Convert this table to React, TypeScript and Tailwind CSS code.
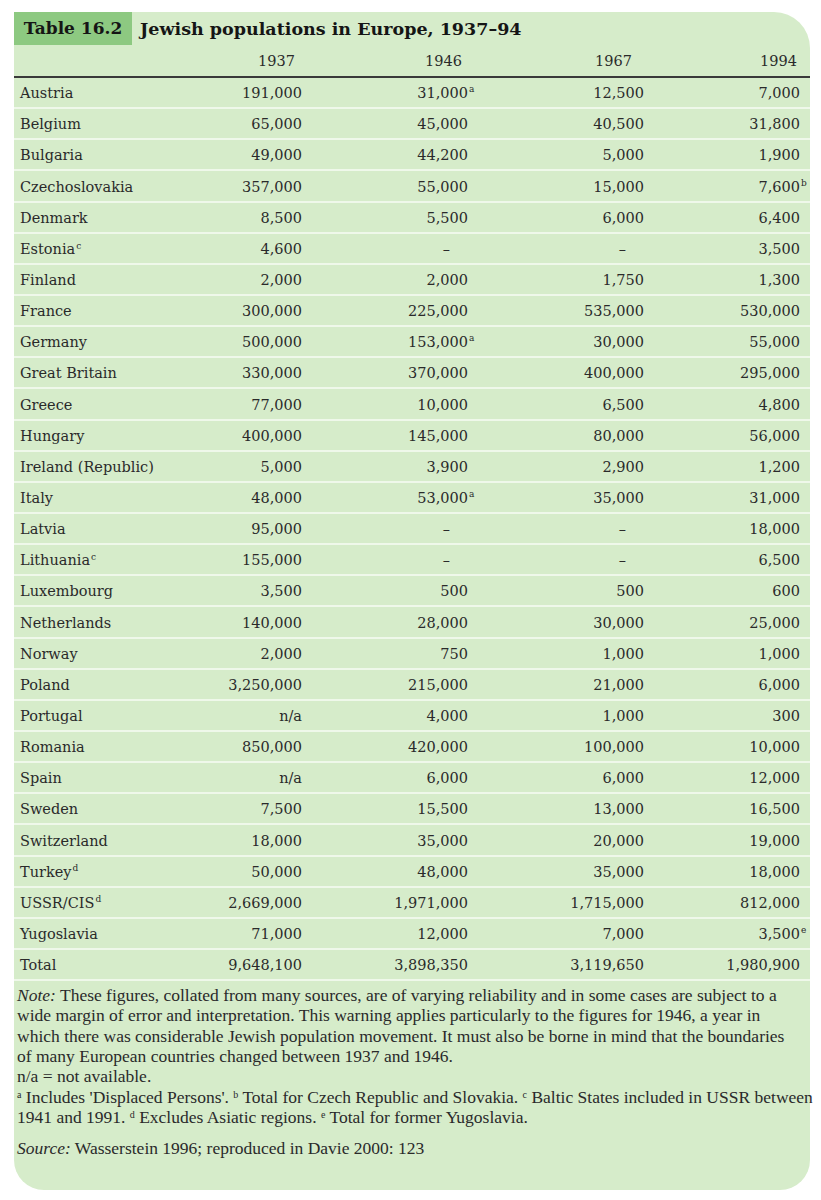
import React from 'react';

type Cell = string | [string, string];

const rows: { name: string; sup?: string; vals: Cell[] }[] = [
  { name: 'Austria', vals: ['191,000', ['31,000', 'a'], '12,500', '7,000'] },
  { name: 'Belgium', vals: ['65,000', '45,000', '40,500', '31,800'] },
  { name: 'Bulgaria', vals: ['49,000', '44,200', '5,000', '1,900'] },
  { name: 'Czechoslovakia', vals: ['357,000', '55,000', '15,000', ['7,600', 'b']] },
  { name: 'Denmark', vals: ['8,500', '5,500', '6,000', '6,400'] },
  { name: 'Estonia', sup: 'c', vals: ['4,600', '–', '–', '3,500'] },
  { name: 'Finland', vals: ['2,000', '2,000', '1,750', '1,300'] },
  { name: 'France', vals: ['300,000', '225,000', '535,000', '530,000'] },
  { name: 'Germany', vals: ['500,000', ['153,000', 'a'], '30,000', '55,000'] },
  { name: 'Great Britain', vals: ['330,000', '370,000', '400,000', '295,000'] },
  { name: 'Greece', vals: ['77,000', '10,000', '6,500', '4,800'] },
  { name: 'Hungary', vals: ['400,000', '145,000', '80,000', '56,000'] },
  { name: 'Ireland (Republic)', vals: ['5,000', '3,900', '2,900', '1,200'] },
  { name: 'Italy', vals: ['48,000', ['53,000', 'a'], '35,000', '31,000'] },
  { name: 'Latvia', vals: ['95,000', '–', '–', '18,000'] },
  { name: 'Lithuania', sup: 'c', vals: ['155,000', '–', '–', '6,500'] },
  { name: 'Luxembourg', vals: ['3,500', '500', '500', '600'] },
  { name: 'Netherlands', vals: ['140,000', '28,000', '30,000', '25,000'] },
  { name: 'Norway', vals: ['2,000', '750', '1,000', '1,000'] },
  { name: 'Poland', vals: ['3,250,000', '215,000', '21,000', '6,000'] },
  { name: 'Portugal', vals: ['n/a', '4,000', '1,000', '300'] },
  { name: 'Romania', vals: ['850,000', '420,000', '100,000', '10,000'] },
  { name: 'Spain', vals: ['n/a', '6,000', '6,000', '12,000'] },
  { name: 'Sweden', vals: ['7,500', '15,500', '13,000', '16,500'] },
  { name: 'Switzerland', vals: ['18,000', '35,000', '20,000', '19,000'] },
  { name: 'Turkey', sup: 'd', vals: ['50,000', '48,000', '35,000', '18,000'] },
  { name: 'USSR/CIS', sup: 'd', vals: ['2,669,000', '1,971,000', '1,715,000', '812,000'] },
  { name: 'Yugoslavia', vals: ['71,000', '12,000', '7,000', ['3,500', 'e']] },
  { name: 'Total', vals: ['9,648,100', '3,898,350', '3,119,650', '1,980,900'] },
];

const grid = 'grid grid-cols-[190px_92px_166px_176px_156px] pl-[6px] pr-[10px]';

function NumCell({ v }: { v: Cell }) {
  if (Array.isArray(v)) {
    return (
      <div className="text-right">
        <span className="relative">
          {v[0]}
          <span className="absolute left-full top-[-2px] pl-[1px] text-[9px]">{v[1]}</span>
        </span>
      </div>
    );
  }
  if (v === '–') return <div className="text-right pr-[18px]">–</div>;
  return <div className="text-right">{v}</div>;
}

function Fn({ c }: { c: string }) {
  return <sup className="text-[10px] leading-none">{c}</sup>;
}

export default function App() {
  return (
    <div className="w-[821px] h-[1200px] bg-white pl-[14px] pt-[12px]">
      <div className="w-[796px] h-[1178px] bg-[#d6ecca] rounded-tr-[36px] rounded-b-[30px] text-[#2a2a2a]">
        {/* title strip */}
        <div className="flex items-center h-[33px] font-['DejaVu_Serif',serif] font-bold text-[#151515]">
          <div className="h-full w-[118px] bg-[#8dc981] flex items-center justify-center text-[17px] pt-[1px]">
            Table 16.2
          </div>
          <div className="ml-[8px] text-[17.5px] pt-[1px]">Jewish populations in Europe, 1937–94</div>
        </div>

        <div className="font-['DejaVu_Serif',serif] text-[14.5px]">
          {/* header */}
          <div className={`${grid} h-[33px] items-center border-b-2 border-[#3a3a3a] pt-[2px]`}>
            <div />
            <div className="text-right pr-[7px]">1937</div>
            <div className="text-right pr-[6px]">1946</div>
            <div className="text-right pr-[12px]">1967</div>
            <div className="text-right pr-[3px]">1994</div>
          </div>

          {rows.map((r) => (
            <div key={r.name} className={`${grid} h-[31.15px] items-center border-b-2 border-[#eff8ea] pt-[3px]`}>
              <div>
                {r.name}
                {r.sup && <sup className="text-[9px] top-[-0.6em] ml-[1px]">{r.sup}</sup>}
              </div>
              {r.vals.map((v, i) => (
                <NumCell key={i} v={v} />
              ))}
            </div>
          ))}
        </div>

        {/* notes */}
        <div className="px-[3px] pt-[4px] font-['Liberation_Serif',serif] text-[17.5px] leading-[20.3px] text-[#2a2a2a] whitespace-nowrap">
          <p>
            <i>Note:</i> These figures, collated from many sources, are of varying reliability and in some cases are subject to a
            <br />
            wide margin of error and interpretation. This warning applies particularly to the figures for 1946, a year in
            <br />
            which there was considerable Jewish population movement. It must also be borne in mind that the boundaries
            <br />
            of many European countries changed between 1937 and 1946.
          </p>
          <p>n/a = not available.</p>
          <p>
            <Fn c="a" /> Includes 'Displaced Persons'. <Fn c="b" /> Total for Czech Republic and Slovakia. <Fn c="c" /> Baltic
            States included in USSR between
            <br />
            1941 and 1991. <Fn c="d" /> Excludes Asiatic regions. <Fn c="e" /> Total for former Yugoslavia.
          </p>
          <p className="mt-[11px]">
            <i>Source:</i> Wasserstein 1996; reproduced in Davie 2000: 123
          </p>
        </div>
      </div>
    </div>
  );
}
